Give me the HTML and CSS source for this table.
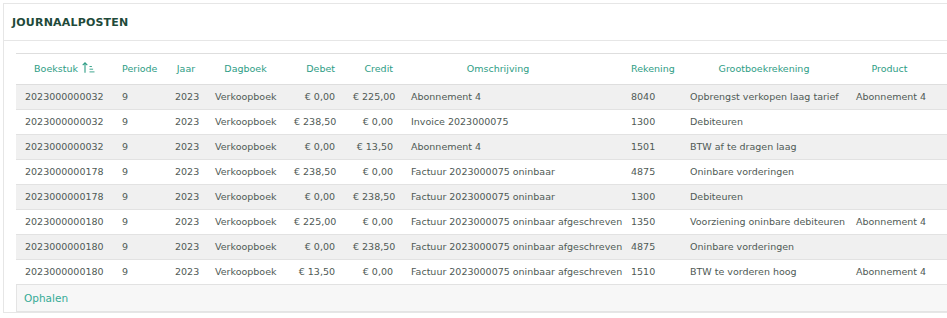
FILE: index.html
```html
<!DOCTYPE html>
<html lang="nl">
<head>
<meta charset="utf-8">
<title>Journaalposten</title>
<link rel="stylesheet" href="styles.css">
</head>
<body>
<div class="card">
  <div class="card-head"><h2 class="title">JOURNAALPOSTEN</h2></div>
  <div class="card-body">
    <table class="grid">
      <colgroup>
        <col class="c-boek"><col class="c-per"><col class="c-jaar"><col class="c-dag"><col class="c-deb"><col class="c-cred"><col class="c-oms"><col class="c-rek"><col class="c-gb"><col class="c-prod">
      </colgroup>
      <thead>
        <tr>
          <th class="sort">Boekstuk <svg class="sort-icon" width="13" height="11" viewBox="0 0 13 11"><path d="M3 10.8V0.8M0.7 3.1L3 0.8L5.3 3.1" fill="none" stroke="currentColor" stroke-width="1.1"/><path d="M7.5 4.5h2.4M7.5 7.2h3.6M7.5 9.9h5" fill="none" stroke="currentColor" stroke-width="0.9"/></svg></th>
          <th>Periode</th>
          <th>Jaar</th>
          <th>Dagboek</th>
          <th class="num">Debet</th>
          <th class="num">Credit</th>
          <th class="th-oms">Omschrijving</th>
          <th>Rekening</th>
          <th>Grootboekrekening</th>
          <th class="th-prod">Product</th>
        </tr>
      </thead>
      <tbody>
        <tr><td>2023000000032</td><td>9</td><td>2023</td><td>Verkoopboek</td><td class="num">€ 0,00</td><td class="num">€ 225,00</td><td>Abonnement 4</td><td>8040</td><td>Opbrengst verkopen laag tarief</td><td>Abonnement 4</td></tr>
        <tr><td>2023000000032</td><td>9</td><td>2023</td><td>Verkoopboek</td><td class="num">€ 238,50</td><td class="num">€ 0,00</td><td>Invoice 2023000075</td><td>1300</td><td>Debiteuren</td><td></td></tr>
        <tr><td>2023000000032</td><td>9</td><td>2023</td><td>Verkoopboek</td><td class="num">€ 0,00</td><td class="num">€ 13,50</td><td>Abonnement 4</td><td>1501</td><td>BTW af te dragen laag</td><td></td></tr>
        <tr><td>2023000000178</td><td>9</td><td>2023</td><td>Verkoopboek</td><td class="num">€ 238,50</td><td class="num">€ 0,00</td><td>Factuur 2023000075 oninbaar</td><td>4875</td><td>Oninbare vorderingen</td><td></td></tr>
        <tr><td>2023000000178</td><td>9</td><td>2023</td><td>Verkoopboek</td><td class="num">€ 0,00</td><td class="num">€ 238,50</td><td>Factuur 2023000075 oninbaar</td><td>1300</td><td>Debiteuren</td><td></td></tr>
        <tr><td>2023000000180</td><td>9</td><td>2023</td><td>Verkoopboek</td><td class="num">€ 225,00</td><td class="num">€ 0,00</td><td>Factuur 2023000075 oninbaar afgeschreven</td><td>1350</td><td>Voorziening oninbare debiteuren</td><td>Abonnement 4</td></tr>
        <tr><td>2023000000180</td><td>9</td><td>2023</td><td>Verkoopboek</td><td class="num">€ 0,00</td><td class="num">€ 238,50</td><td>Factuur 2023000075 oninbaar afgeschreven</td><td>4875</td><td>Oninbare vorderingen</td><td></td></tr>
        <tr><td>2023000000180</td><td>9</td><td>2023</td><td>Verkoopboek</td><td class="num">€ 13,50</td><td class="num">€ 0,00</td><td>Factuur 2023000075 oninbaar afgeschreven</td><td>1510</td><td>BTW te vorderen hoog</td><td>Abonnement 4</td></tr>
      </tbody>
    </table>
    <div class="footer"><a class="fetch" href="#">Ophalen</a></div>
  </div>
</div>
</body>
</html>
```
FILE: styles.css
```css
html { overflow: hidden; }
body {
  margin: 0;
  padding: 3px;
  background: #fff;
  font-family: "DejaVu Sans", sans-serif;
  font-size: 9.5px;
  color: #4f5a55;
}
.card {
  width: 980px;
  border: 1px solid #e6e6e6;
  border-right: none;
  background: #fff;
}
.card-head {
  height: 36px;
  display: flex;
  align-items: center;
  padding: 0 8px;
  border-bottom: 1px solid #e6e6e6;
}
.title {
  margin: 0;
  font-size: 11px;
  font-weight: bold;
  color: #1f4a3a;
  letter-spacing: 0.2px;
}
.card-body {
  padding: 12px 12px 0 12px;
}
.grid {
  border-collapse: collapse;
  table-layout: fixed;
  width: 940px;
}
.c-boek { width: 97px; }
.c-per { width: 53px; }
.c-jaar { width: 40px; }
.c-dag { width: 79px; }
.c-deb { width: 59px; }
.c-cred { width: 58px; }
.c-oms { width: 220px; }
.c-rek { width: 59px; }
.c-gb { width: 166px; }
.c-prod { width: 109px; }
.grid th {
  height: 31px;
  box-sizing: border-box;
  padding: 0 9px 1px;
  line-height: 12px;
  font-weight: normal;
  color: #2e9d85;
  text-align: center;
  vertical-align: middle;
  white-space: nowrap;
  border-top: 1px solid #dedede;
  border-bottom: 1px solid #dedede;
}
.grid th.num, .grid td.num { text-align: right; }
.grid th.th-oms { padding-right: 37px; }
.grid th.th-prod { padding-right: 33px; }
.sort-icon {
  vertical-align: -1px;
  margin-left: 1px;
}
.grid td {
  padding: 6px 9px;
  line-height: 12px;
  white-space: nowrap;
  border-bottom: 1px solid #e2e2e2;
  text-align: left;
}
.grid tbody tr:nth-child(odd) td { background: #f0f0f0; }
.footer {
  width: 938px;
  height: 26px;
  display: flex;
  align-items: center;
  padding: 0 7px;
  background: #f7f7f7;
  border: 1px solid #e4e4e4;
  border-top: none;
  border-right: none;
}
.fetch {
  color: #35ab96;
  text-decoration: none;
  font-size: 10.5px;
}
```
